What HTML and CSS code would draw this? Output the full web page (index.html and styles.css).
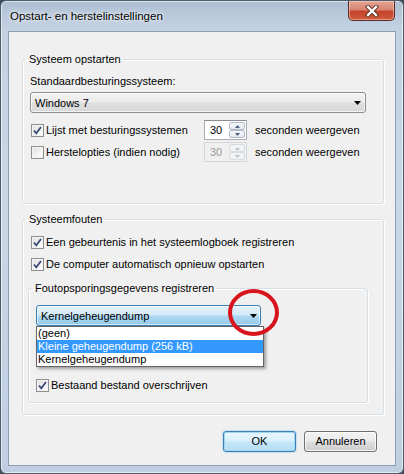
FILE: index.html
```html
<!DOCTYPE html>
<html>
<head>
<meta charset="utf-8">
<link rel="stylesheet" href="styles.css">
</head>
<body>
<div class="window">
  <div class="titlebar">
    <span class="title">Opstart- en herstelinstellingen</span>
    <div class="close">
      <svg width="14" height="12" viewBox="0 0 14 12">
        <path d="M3 2 L11 10 M11 2 L3 10" stroke="#5a2a22" stroke-width="4.2" stroke-linecap="square"/>
        <path d="M3 2 L11 10 M11 2 L3 10" stroke="#ffffff" stroke-width="2.4" stroke-linecap="square"/>
      </svg>
    </div>
  </div>
  <div class="client">
    <fieldset class="group g1">
      <legend>Systeem opstarten</legend>
      <div class="label">Standaardbesturingssysteem:</div>
      <div class="combo os">
        <span>Windows 7</span>
        <svg class="arrow" width="7" height="4" viewBox="0 0 7 4"><path d="M0 0 H7 L3.5 4 Z" fill="#000"/></svg>
      </div>
      <div class="row first">
        <div class="check-label">
          <span class="box"><svg width="11" height="11" viewBox="0 0 11 11"><path d="M2 5.5 L4.3 8.3 L9 2" fill="none" stroke="#3b4a76" stroke-width="1.8"/></svg></span>
          <span>Lijst met besturingssystemen</span>
        </div>
        <div class="spin">
          <span class="val">30</span>
          <div class="arrows">
            <span class="btn"><svg width="5" height="3" viewBox="0 0 5 3"><path d="M0 3 H5 L2.5 0 Z" fill="#4d6185"/></svg></span>
            <span class="btn"><svg width="5" height="3" viewBox="0 0 5 3"><path d="M0 0 H5 L2.5 3 Z" fill="#4d6185"/></svg></span>
          </div>
        </div>
        <span class="suffix">seconden weergeven</span>
      </div>
      <div class="row second">
        <div class="check-label">
          <span class="box"></span>
          <span>Herstelopties (indien nodig)</span>
        </div>
        <div class="spin disabled">
          <span class="val">30</span>
          <div class="arrows">
            <span class="btn"><svg width="5" height="3" viewBox="0 0 5 3"><path d="M0 3 H5 L2.5 0 Z" fill="#b9c0cc"/></svg></span>
            <span class="btn"><svg width="5" height="3" viewBox="0 0 5 3"><path d="M0 0 H5 L2.5 3 Z" fill="#b9c0cc"/></svg></span>
          </div>
        </div>
        <span class="suffix">seconden weergeven</span>
      </div>
    </fieldset>

    <fieldset class="group g2">
      <legend>Systeemfouten</legend>
      <div class="check-label cl1">
        <span class="box"><svg width="11" height="11" viewBox="0 0 11 11"><path d="M2 5.5 L4.3 8.3 L9 2" fill="none" stroke="#3b4a76" stroke-width="1.8"/></svg></span>
        <span>Een gebeurtenis in het systeemlogboek registreren</span>
      </div>
      <div class="check-label cl2">
        <span class="box"><svg width="11" height="11" viewBox="0 0 11 11"><path d="M2 5.5 L4.3 8.3 L9 2" fill="none" stroke="#3b4a76" stroke-width="1.8"/></svg></span>
        <span>De computer automatisch opnieuw opstarten</span>
      </div>
      <fieldset class="group inner">
        <legend>Foutopsporingsgegevens registreren</legend>
        <div class="combo-wrap">
          <div class="combo focused">
            <span>Kernelgeheugendump</span>
            <svg class="arrow" width="7" height="4" viewBox="0 0 7 4"><path d="M0 0 H7 L3.5 4 Z" fill="#000"/></svg>
          </div>
          <ul class="list">
            <li>(geen)</li>
            <li class="sel">Kleine geheugendump (256 kB)</li>
            <li>Kernelgeheugendump</li>
          </ul>
        </div>
        <div class="check-label cl3">
          <span class="box"><svg width="11" height="11" viewBox="0 0 11 11"><path d="M2 5.5 L4.3 8.3 L9 2" fill="none" stroke="#3b4a76" stroke-width="1.8"/></svg></span>
          <span>Bestaand bestand overschrijven</span>
        </div>
      </fieldset>
    </fieldset>

    <div class="buttons">
      <button class="button default">OK</button>
      <button class="button">Annuleren</button>
    </div>
  </div>
  <div class="annotation"></div>
</div>
</body>
</html>
```

FILE: styles.css
```css
* { box-sizing: border-box; }
html, body {
  margin: 0;
  padding: 0;
  background: #3d4a57;
}
body {
  width: 404px;
  height: 474px;
  overflow: hidden;
  font-family: "Liberation Sans", Arial, sans-serif;
  font-size: 11px;
  color: #000;
}
.window {
  position: relative;
  width: 404px;
  height: 474px;
  display: flex;
  flex-direction: column;
  border-radius: 6px;
  border: 1px solid #4e5d6c;
  background: linear-gradient(180deg, #aebfd3 0px, #c3d2e3 28px, #c9d7e7 200px, #bfcfe1 474px);
  box-shadow: inset 0 0 0 1px rgba(255,255,255,0.55);
}
.titlebar {
  height: 30px;
  display: flex;
  justify-content: space-between;
  align-items: flex-start;
}
.title {
  margin: 7px 0 0 9px;
  font-size: 11.5px;
  line-height: 16px;
  text-shadow: 0 0 6px rgba(255,255,255,0.9), 0 0 3px rgba(255,255,255,0.9);
}
.close {
  width: 47px;
  height: 20px;
  margin: 0 8px 0 0;
  border: 1px solid #5d2b25;
  border-top: none;
  border-radius: 0 0 5px 5px;
  background: linear-gradient(180deg, #e3a596 0%, #d88672 45%, #c4452c 55%, #cf5a3c 100%);
  box-shadow: inset 0 0 0 1px rgba(255,220,210,0.5);
  display: flex;
  align-items: center;
  justify-content: center;
}
.client {
  flex: 1;
  margin: 0 7px 7px 7px;
  border: 1px solid #8b9eb4;
  background: #f0f0f0;
  padding: 19px 0 0 13px;
}
.group {
  margin: 0;
  padding: 0 0 0 5px;
  border: 1px solid #d5dfe5;
  border-radius: 3px;
  box-shadow: inset 1px 1px 0 #fff, 1px 1px 0 #fff;
  min-width: 0;
}
.group legend {
  padding: 0 2px;
  margin-left: -1px;
  line-height: 16px;
  height: 16px;
}
.g1 {
  width: 362px;
  padding-top: 6px;
  padding-bottom: 41px;
}
.label {
  margin-left: 2px;
  line-height: 16px;
  height: 16px;
}
.combo {
  position: relative;
  height: 21px;
  border: 1px solid #8e8f8f;
  border-radius: 3px;
  background: linear-gradient(180deg, #f3f3f3 0%, #ebebeb 48%, #dedede 52%, #d9d9d9 100%);
  box-shadow: inset 0 0 0 1px rgba(255,255,255,0.7);
  display: flex;
  align-items: center;
  justify-content: space-between;
  padding: 0 4px 0 4px;
  line-height: 16px;
}
.os {
  margin: 3px 0 0 2px;
  width: 336px;
}
.row {
  display: flex;
  align-items: center;
  height: 20px;
  margin-left: 3px;
}
.row.first { margin-top: 7px; }
.row.second { margin-top: 2px; }
.check-label {
  display: flex;
  align-items: center;
  height: 16px;
  line-height: 16px;
  white-space: nowrap;
}
.row .check-label { width: 173px; }
.box {
  width: 13px;
  height: 13px;
  flex: none;
  margin-right: 2px;
  border: 1px solid #8e8f8f;
  background: linear-gradient(135deg, #dcdcdc 0%, #f4f4f4 60%, #ffffff 100%);
  box-shadow: inset 0 0 0 1px #f4f4f4;
  display: flex;
  align-items: center;
  justify-content: center;
}
.spin {
  width: 43px;
  height: 20px;
  display: flex;
  border: 1px solid #abadb3;
  border-top-color: #8b8d92;
  background: #fff;
}
.spin .val {
  flex: 1;
  padding-left: 5px;
  line-height: 18px;
}
.arrows {
  width: 17px;
  display: flex;
  flex-direction: column;
  padding: 1px 1px 1px 0;
}
.arrows .btn {
  flex: 1;
  border: 1px solid #b3bcc8;
  border-radius: 2px;
  background: linear-gradient(180deg, #f6f7f9, #e3e7ee);
  display: flex;
  align-items: center;
  justify-content: center;
}
.spin.disabled { border-color: #d4d6da; background: #f0f0f0; }
.spin.disabled .val { color: #9c9c9c; }
.spin.disabled .btn { border-color: #d8dce2; background: #f2f3f5; }
.suffix {
  margin-left: 8px;
  white-space: nowrap;
}
.g2 {
  width: 362px;
  margin-top: 7px;
  padding-top: 7px;
  padding-bottom: 11px;
}
.cl1 { margin-left: 3px; }
.cl2 { margin-left: 3px; margin-top: 6px; }
.inner {
  width: 340px;
  margin-top: 8px;
  padding: 9px 0 9px 7px;
}
.inner legend { margin-left: -3px; }
.combo-wrap {
  position: relative;
  width: 225px;
}
.combo.focused {
  border-color: #3c7fb1;
  background: linear-gradient(180deg, #e3f1fb 0%, #d2eaf9 48%, #aed8f2 52%, #94c9ea 100%);
  box-shadow: inset 0 0 0 1px rgba(255,255,255,0.6);
  padding-right: 3px;
}
.list {
  position: absolute;
  left: 0;
  top: 21px;
  width: 228px;
  margin: 0;
  padding: 0;
  list-style: none;
  background: #fff;
  border: 1px solid #646464;
  box-shadow: 2px 2px 3px rgba(0,0,0,0.35);
  z-index: 2;
}
.list li {
  height: 13px;
  line-height: 13px;
  padding-left: 1px;
  white-space: nowrap;
}
.list li.sel {
  background: #3399ff;
  color: #fff;
}
.cl3 { margin-top: 51px; }
.buttons {
  display: flex;
  justify-content: flex-end;
  gap: 8px;
  margin-top: 16px;
  padding-right: 18px;
}
.button {
  width: 73px;
  height: 21px;
  font: inherit;
  color: #000;
  border: 1px solid #707070;
  border-radius: 3px;
  background: linear-gradient(180deg, #f2f2f2 0%, #ebebeb 48%, #dddddd 52%, #cfcfcf 100%);
  box-shadow: inset 0 0 0 1px rgba(255,255,255,0.8);
  padding: 0;
  line-height: 17px;
}
.button.default {
  border-color: #3c7fb1;
  background: linear-gradient(180deg, #eaf6fd 0%, #d9f0fc 48%, #c4e6f8 52%, #b6def5 100%);
  box-shadow: inset 0 0 0 1px #9fd7f5, 0 0 2px #63b8ea;
}
.annotation {
  position: absolute;
  left: 227px;
  top: 288px;
  width: 51px;
  height: 47px;
  border: 4px solid #d8141d;
  border-radius: 50%;
  z-index: 3;
}
```
